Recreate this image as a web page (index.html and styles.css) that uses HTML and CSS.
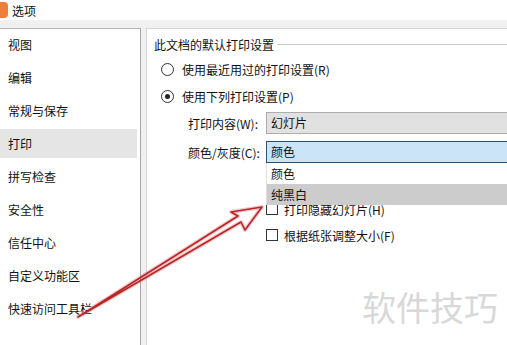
FILE: index.html
```html
<!DOCTYPE html>
<html lang="zh-CN">
<head>
<meta charset="UTF-8">
<title>选项</title>
<link rel="stylesheet" href="styles.css">
</head>
<body>

<div class="titlebar">
  <span class="app-icon"></span>
  <span class="title">选项</span>
</div>

<div class="main">
  <ul class="nav">
    <li>视图</li>
    <li>编辑</li>
    <li>常规与保存</li>
    <li class="active">打印</li>
    <li>拼写检查</li>
    <li>安全性</li>
    <li>信任中心</li>
    <li>自定义功能区</li>
    <li>快速访问工具栏</li>
  </ul>

  <div class="panel">
    <div class="group-title"><span>此文档的默认打印设置</span></div>
    <div class="radio-row"><span class="radio"></span>使用最近用过的打印设置(R)</div>
    <div class="radio-row"><span class="radio checked"></span>使用下列打印设置(P)</div>

    <div class="field">
      <span class="field-label">打印内容(W):</span>
      <div class="combo">幻灯片</div>
    </div>
    <div class="field">
      <span class="field-label">颜色/灰度(C):</span>
      <div class="combo focused">颜色
        <ul class="dropdown">
          <li>颜色</li>
          <li class="hover">纯黑白</li>
        </ul>
      </div>
    </div>

    <div class="check-row first"><span class="box"></span>打印隐藏幻灯片(H)</div>
    <div class="check-row"><span class="box"></span>根据纸张调整大小(F)</div>
  </div>
</div>

<div class="watermark">软件技巧</div>

<!-- 红色箭头标注 -->
<svg class="arrow" width="507" height="345" viewBox="0 0 507 345">
  <polygon points="78,317 238,216 231,212 262,207 245,230 241,222" fill="none" stroke="#e06060" stroke-opacity="0.35" stroke-width="4" stroke-linejoin="round"/>
  <polygon points="78,317 238,216 231,212 262,207 245,230 241,222" fill="none" stroke="#b8262a" stroke-width="1.6" stroke-linejoin="round"/>
</svg>

</body>
</html>
```

FILE: styles.css
```css
body {
  margin: 0;
  width: 507px;
  height: 345px;
  overflow: hidden;
  position: relative;
  background-color: #f0f0f0;
  font-family: "Microsoft YaHei", "Noto Sans CJK SC", sans-serif;
  font-size: 12px;
  color: #111;
}
.titlebar {
  height: 20px;
  background-color: #fff;
  display: flex;
  align-items: center;
}
.app-icon {
  width: 16px;
  height: 16px;
  margin-left: -8px;
  border-radius: 4px;
  background-color: #ee7f38;
}
.title {
  margin-left: 4px;
  font-size: 12px;
}
.main {
  display: flex;
  margin-top: 8px;
  height: 317px;
}
.nav {
  flex-shrink: 0;
  list-style: none;
  margin: 0;
  padding: 1px 0 0;
  width: 140px;
  background-color: #fff;
  border-top: 1px solid #b5b5b5;
  border-right: 1px solid #a6a6a6;
}
.nav li {
  height: 29px;
  line-height: 29px;
  margin-bottom: 4px;
  padding-left: 8px;
  margin-right: 3px;
}
.nav li.active {
  background-color: #e5e5e5;
}
.panel {
  margin-left: 5px;
  flex: 1;
  min-width: 0;
  overflow: hidden;
  background-color: #fff;
  border-top: 1px solid #d6d6d6;
  border-left: 1px solid #d6d6d6;
  padding-top: 7px;
}
.group-title {
  display: flex;
  align-items: center;
  height: 16px;
  padding-left: 7px;
}
.group-title::after {
  content: "";
  flex: 1;
  height: 1px;
  margin-left: 3px;
  margin-top: 1px;
  background-color: #c8c8c8;
}
.radio-row {
  display: flex;
  align-items: center;
  height: 20px;
  margin-top: 7px;
  padding-left: 14px;
}
.radio {
  width: 11px;
  height: 11px;
  border: 1px solid #333;
  border-radius: 50%;
  margin-right: 8px;
  box-sizing: content-box;
  position: relative;
}
.radio.checked::after {
  content: "";
  position: absolute;
  left: 3px;
  top: 3px;
  width: 5px;
  height: 5px;
  border-radius: 50%;
  background-color: #222;
}
.field {
  display: flex;
  align-items: center;
  height: 22px;
  margin-top: 7px;
  padding-left: 41px;
}
.radio-row + .field {
  margin-top: 6px;
}
.field-label {
  width: 78px;
  flex-shrink: 0;
}
.combo {
  flex-shrink: 0;
  position: relative;
  width: 260px;
  height: 20px;
  line-height: 20px;
  padding-left: 4px;
  background-color: #e1e1e1;
  border: 1px solid #adadad;
}
.combo.focused {
  background-color: #cce4f7;
  border-color: #2b5374;
}
.dropdown {
  position: absolute;
  top: 21px;
  left: -1px;
  width: 266px;
  margin: 0;
  padding: 0;
  list-style: none;
  background-color: #fff;
  border-left: 1px solid #e0e0e0;
  z-index: 2;
}
.dropdown li {
  height: 21px;
  line-height: 21px;
  padding-left: 4px;
}
.dropdown li.hover {
  background-color: #cccccc;
}
.check-row {
  display: flex;
  align-items: center;
  height: 16px;
  margin-top: 10px;
  padding-left: 119px;
}
.check-row.first {
  margin-top: 38px;
}
.box {
  width: 10px;
  height: 10px;
  border: 1px solid #333;
  margin-right: 6px;
}
.watermark {
  position: absolute;
  left: 362px;
  top: 287px;
  font-size: 34px;
  line-height: 40px;
  color: #d8d8d8;
}
.arrow {
  position: absolute;
  left: 0;
  top: 0;
  pointer-events: none;
}
```
